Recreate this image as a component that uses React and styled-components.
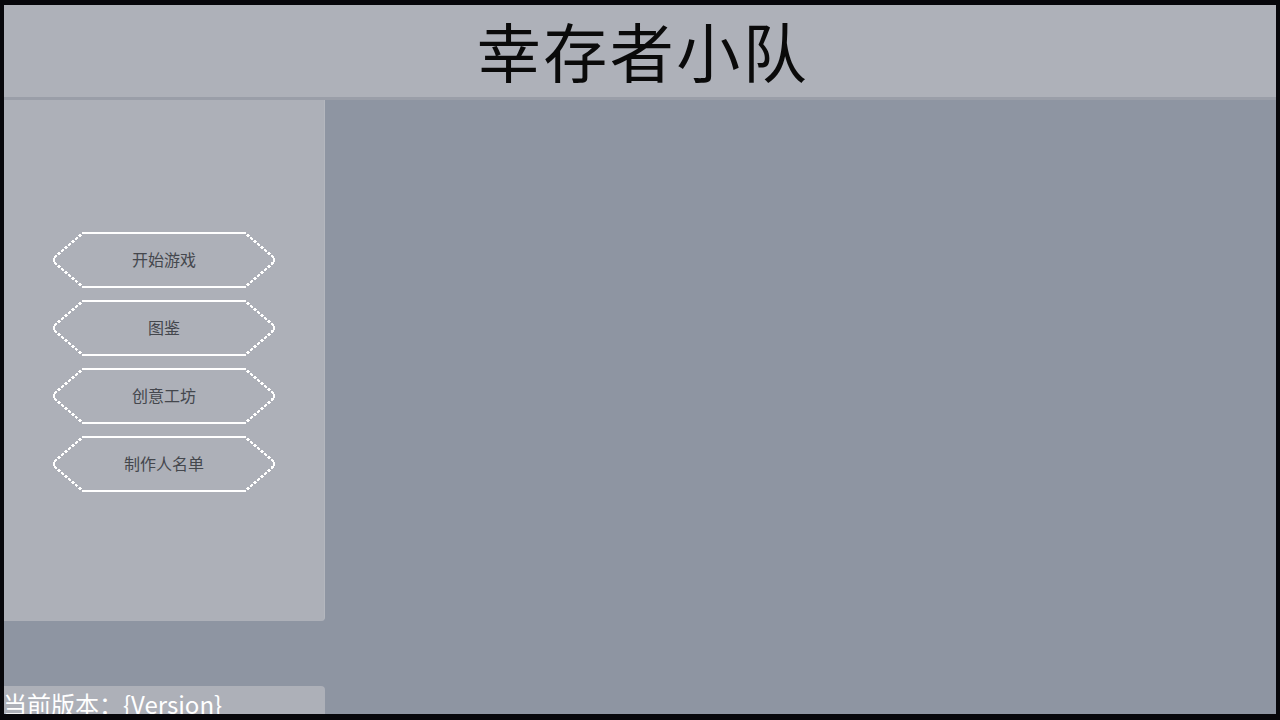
import React from "react";
import styled, { createGlobalStyle } from "styled-components";

const Global = createGlobalStyle`
  html, body { margin: 0; padding: 0; background: #07070b; }
  body { font-family: "Noto Sans CJK SC", "Noto Sans", sans-serif; }
  * { box-sizing: border-box; }
`;

const Frame = styled.div`
  width: 1280px;
  height: 720px;
  padding: 5px 4px 6px 4px;
  background: #07070b;
  overflow: hidden;
`;

const Screen = styled.div`
  width: 100%;
  height: 100%;
  background: #8e95a2;
  display: flex;
  flex-direction: column;
  overflow: hidden;
`;

const Header = styled.header`
  flex: 0 0 95px;
  background: #aeb1b9;
  border-bottom: 3px solid #9a9ea8;
  display: flex;
  align-items: center;
  justify-content: center;
  padding-bottom: 4px;
`;

const Title = styled.h1`
  margin: 0 0 0 6px;
  font-family: "Noto Sans CJK SC", sans-serif;
  font-weight: 400;
  font-size: 64px;
  line-height: 1.25;
  color: #0a0a0a;
  letter-spacing: 2.5px;
`;

const Body = styled.main`
  flex: 1;
  display: flex;
  flex-direction: column;
`;

const MenuPanel = styled.nav`
  width: 321px;
  height: 521px;
  background: #adb0b8;
  border-right: 1px solid #b4b7be;
  border-radius: 0 0 4px 0;
  display: flex;
  flex-direction: column;
  align-items: center;
  justify-content: center;
  gap: 12px;
  padding-top: 2px;
`;

const MenuButton = styled.button`
  position: relative;
  width: 222px;
  height: 56px;
  border: none;
  background: transparent;
  padding: 0;
  cursor: pointer;
  font-family: "Noto Sans CJK SC", sans-serif;
  font-size: 16px;
  color: #44474d;
  display: flex;
  align-items: center;
  justify-content: center;
`;

const Outline = styled.svg`
  position: absolute;
  inset: 0;
  width: 100%;
  height: 100%;
  overflow: visible;
`;

const Label = styled.span`
  position: relative;
  line-height: 1.3;
`;

const Spacer = styled.div`
  flex: 0 0 65px;
`;

const Footer = styled.footer`
  width: 321px;
  flex: 1;
  background: #adb0b8;
  border-radius: 0 4px 0 0;
  overflow: visible;
`;

const Version = styled.div`
  font-family: "Noto Sans CJK SC", sans-serif;
  font-size: 24px;
  line-height: 1;
  margin-top: 6px;
  margin-left: -1px;
  color: #ffffff;
  white-space: nowrap;
`;

function HexOutline() {
  const stroke = "#ffffff";
  return (
    <Outline viewBox="0 0 222 56" shapeRendering="crispEdges" aria-hidden="true">
      <line x1="30" y1="1" x2="192" y2="1" stroke={stroke} strokeWidth="2.5" />
      <line x1="30" y1="55" x2="192" y2="55" stroke={stroke} strokeWidth="2.5" />
      <polyline
        points="221,26 221,30 192,55"
        fill="none"
        stroke={stroke}
        strokeWidth="2.5"
        strokeDasharray="3 1.6"
      />
      <polyline
        points="221,30 221,26 192,1"
        fill="none"
        stroke={stroke}
        strokeWidth="2.5"
        strokeDasharray="3 1.6"
      />
      <polyline
        points="1,26 1,30 30,55"
        fill="none"
        stroke={stroke}
        strokeWidth="2.5"
        strokeDasharray="3 1.6"
      />
      <polyline
        points="1,30 1,26 30,1"
        fill="none"
        stroke={stroke}
        strokeWidth="2.5"
        strokeDasharray="3 1.6"
      />
    </Outline>
  );
}

const items = ["开始游戏", "图鉴", "创意工坊", "制作人名单"];

export default function App() {
  return (
    <>
      <Global />
      <Frame>
        <Screen>
          <Header>
            <Title>幸存者小队</Title>
          </Header>
          <Body>
            <MenuPanel>
              {items.map((t) => (
                <MenuButton key={t}>
                  <HexOutline />
                  <Label>{t}</Label>
                </MenuButton>
              ))}
            </MenuPanel>
            <Spacer />
            <Footer>
              <Version>当前版本：{"{Version}"}</Version>
            </Footer>
          </Body>
        </Screen>
      </Frame>
    </>
  );
}
